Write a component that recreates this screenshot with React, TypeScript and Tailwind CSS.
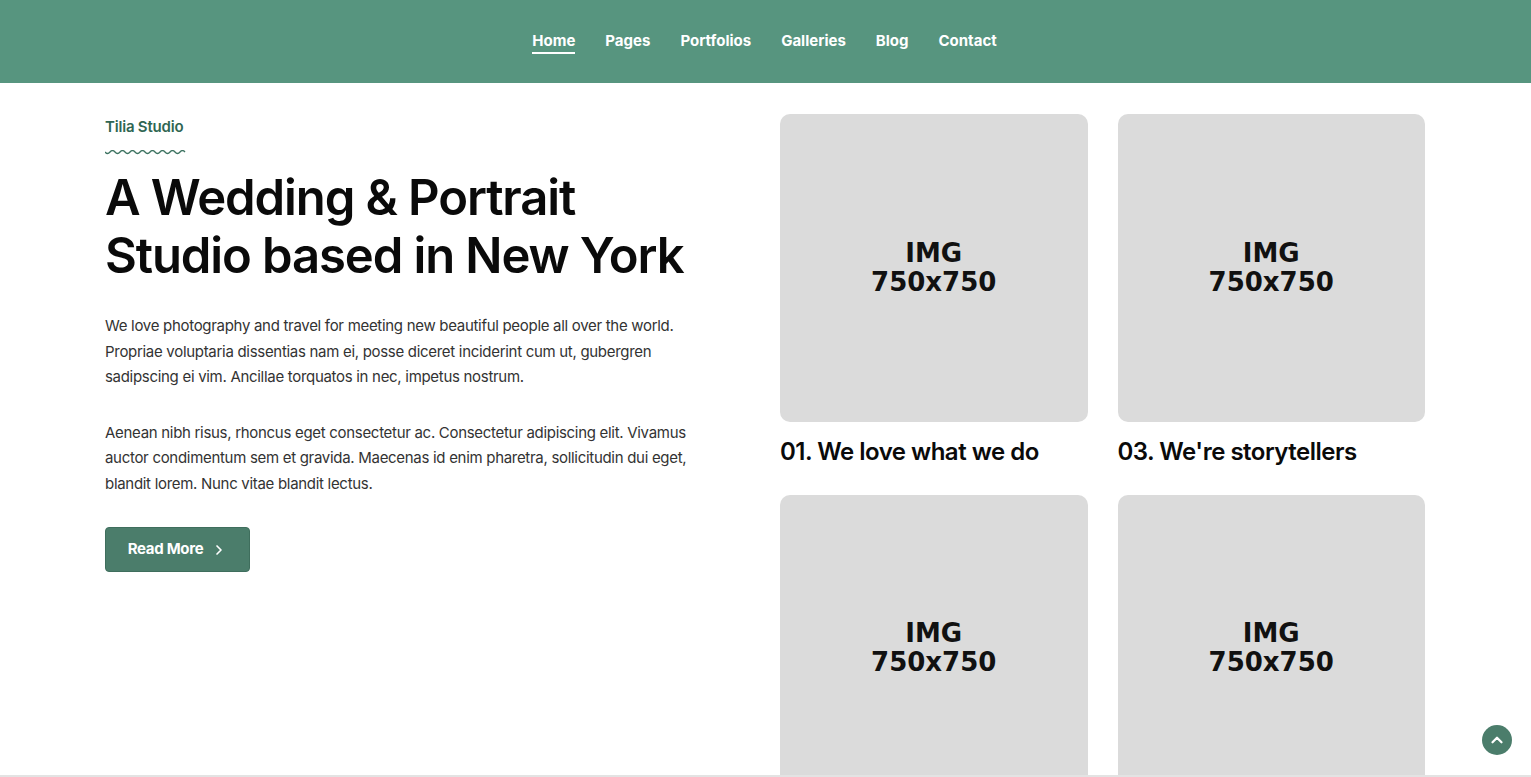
import { ChevronRight, ChevronUp } from "lucide-react";

const NAV = ["Home", "Pages", "Portfolios", "Galleries", "Blog", "Contact"];

const CARDS = [
  { title: "01. We love what we do" },
  { title: "03. We're storytellers" },
  { title: "02. We capture moments" },
  { title: "04. We travel the world" },
];

function Wave() {
  return (
    <svg width="81" height="6" viewBox="0 0 81 6" fill="none" className="block">
      <path
        d="M0 2 q2.5 3 5 0 t5 0 t5 0 t5 0 t5 0 t5 0 t5 0 t5 0 t5 0 t5 0 t5 0 t5 0 t5 0 t5 0 t5 0 t5 0"
        stroke="#3d7361"
        strokeWidth="1.3"
      />
    </svg>
  );
}

export default function App() {
  return (
    <div className="min-h-screen bg-white font-['Inter','Liberation_Sans',sans-serif] text-black">
      {/* ── Header ─────────────────────────── */}
      <header className="h-[83px] bg-[#57957f] flex items-center justify-center">
        <nav className="flex items-center gap-[30px] -mt-[3px] -ml-[2px]">
          {NAV.map((item, idx) => (
            <a
              key={item}
              href="#"
              className="relative text-[15px] font-bold text-white leading-none py-1"
            >
              {item}
              {idx === 0 && (
                <span className="absolute left-0 right-0 -bottom-[2px] h-[2px] bg-white" />
              )}
            </a>
          ))}
        </nav>
      </header>

      {/* ── Hero ─────────────────────────── */}
      <section className="w-[1320px] ml-[105px] grid grid-cols-2 gap-[30px] pt-[31px]">
        <div className="pt-[1px]">
          <p className="text-[15px] font-semibold text-[#2f6653] leading-[24px] tracking-[-0.2px]">
            Tilia Studio
          </p>
          <div className="mt-[11px]">
            <Wave />
          </div>
          <h1 className="mt-[13px] text-[49px] font-semibold leading-[58px] tracking-[-1.1px] text-[#0a0a0a]">
            A Wedding &amp; Portrait
            <br />
            Studio based in New York
          </h1>
          <div className="mt-[28px] max-w-[610px] text-[15px] leading-[25.5px] text-[#333] tracking-[-0.3px] flex flex-col gap-[30px]">
            <p>
              We love photography and travel for meeting new beautiful people all over the world.
              Propriae voluptaria dissentias nam ei, posse diceret inciderint cum ut, gubergren
              sadipscing ei vim. Ancillae torquatos in nec, impetus nostrum.
            </p>
            <p>
              Aenean nibh risus, rhoncus eget consectetur ac. Consectetur adipiscing elit. Vivamus
              auctor condimentum sem et gravida. Maecenas id enim pharetra, sollicitudin dui eget,
              blandit lorem. Nunc vitae blandit lectus.
            </p>
          </div>
          <button
            type="button"
            className="mt-[31px] h-[45px] w-[145px] rounded-[4px] bg-[#4b7d6b] border border-[#3f6e5d] text-white text-[15px] font-bold tracking-[-0.3px] flex items-center justify-center gap-[8px]"
          >
            Read More
            <ChevronRight className="w-4 h-4" strokeWidth={2.5} />
          </button>
        </div>

        <div className="grid grid-cols-2 gap-x-[30px] gap-y-[29px]">
          {CARDS.map((card) => (
            <div key={card.title}>
              <div className="aspect-square rounded-[10px] bg-[#dbdbdb] flex items-center justify-center">
                <span className="text-center font-['DejaVu_Sans',Verdana,sans-serif] font-bold text-[26px] leading-[29px] text-[#111]">
                  IMG
                  <br />
                  750x750
                </span>
              </div>
              <h3 className="mt-[16px] text-[24px] font-semibold leading-[28px] tracking-[-0.5px] text-[#0a0a0a]">
                {card.title}
              </h3>
            </div>
          ))}
        </div>
      </section>

      {/* ── Scroll to top ─────────────────────────── */}
      <button
        type="button"
        className="fixed right-[19px] bottom-[22px] w-[30px] h-[30px] rounded-full bg-[#4b7d6b] flex items-center justify-center text-white"
      >
        <ChevronUp className="w-[18px] h-[18px]" strokeWidth={3} />
      </button>
      <div className="fixed left-0 right-0 bottom-0 h-[2px] bg-[#e3e3e3]" />
    </div>
  );
}
